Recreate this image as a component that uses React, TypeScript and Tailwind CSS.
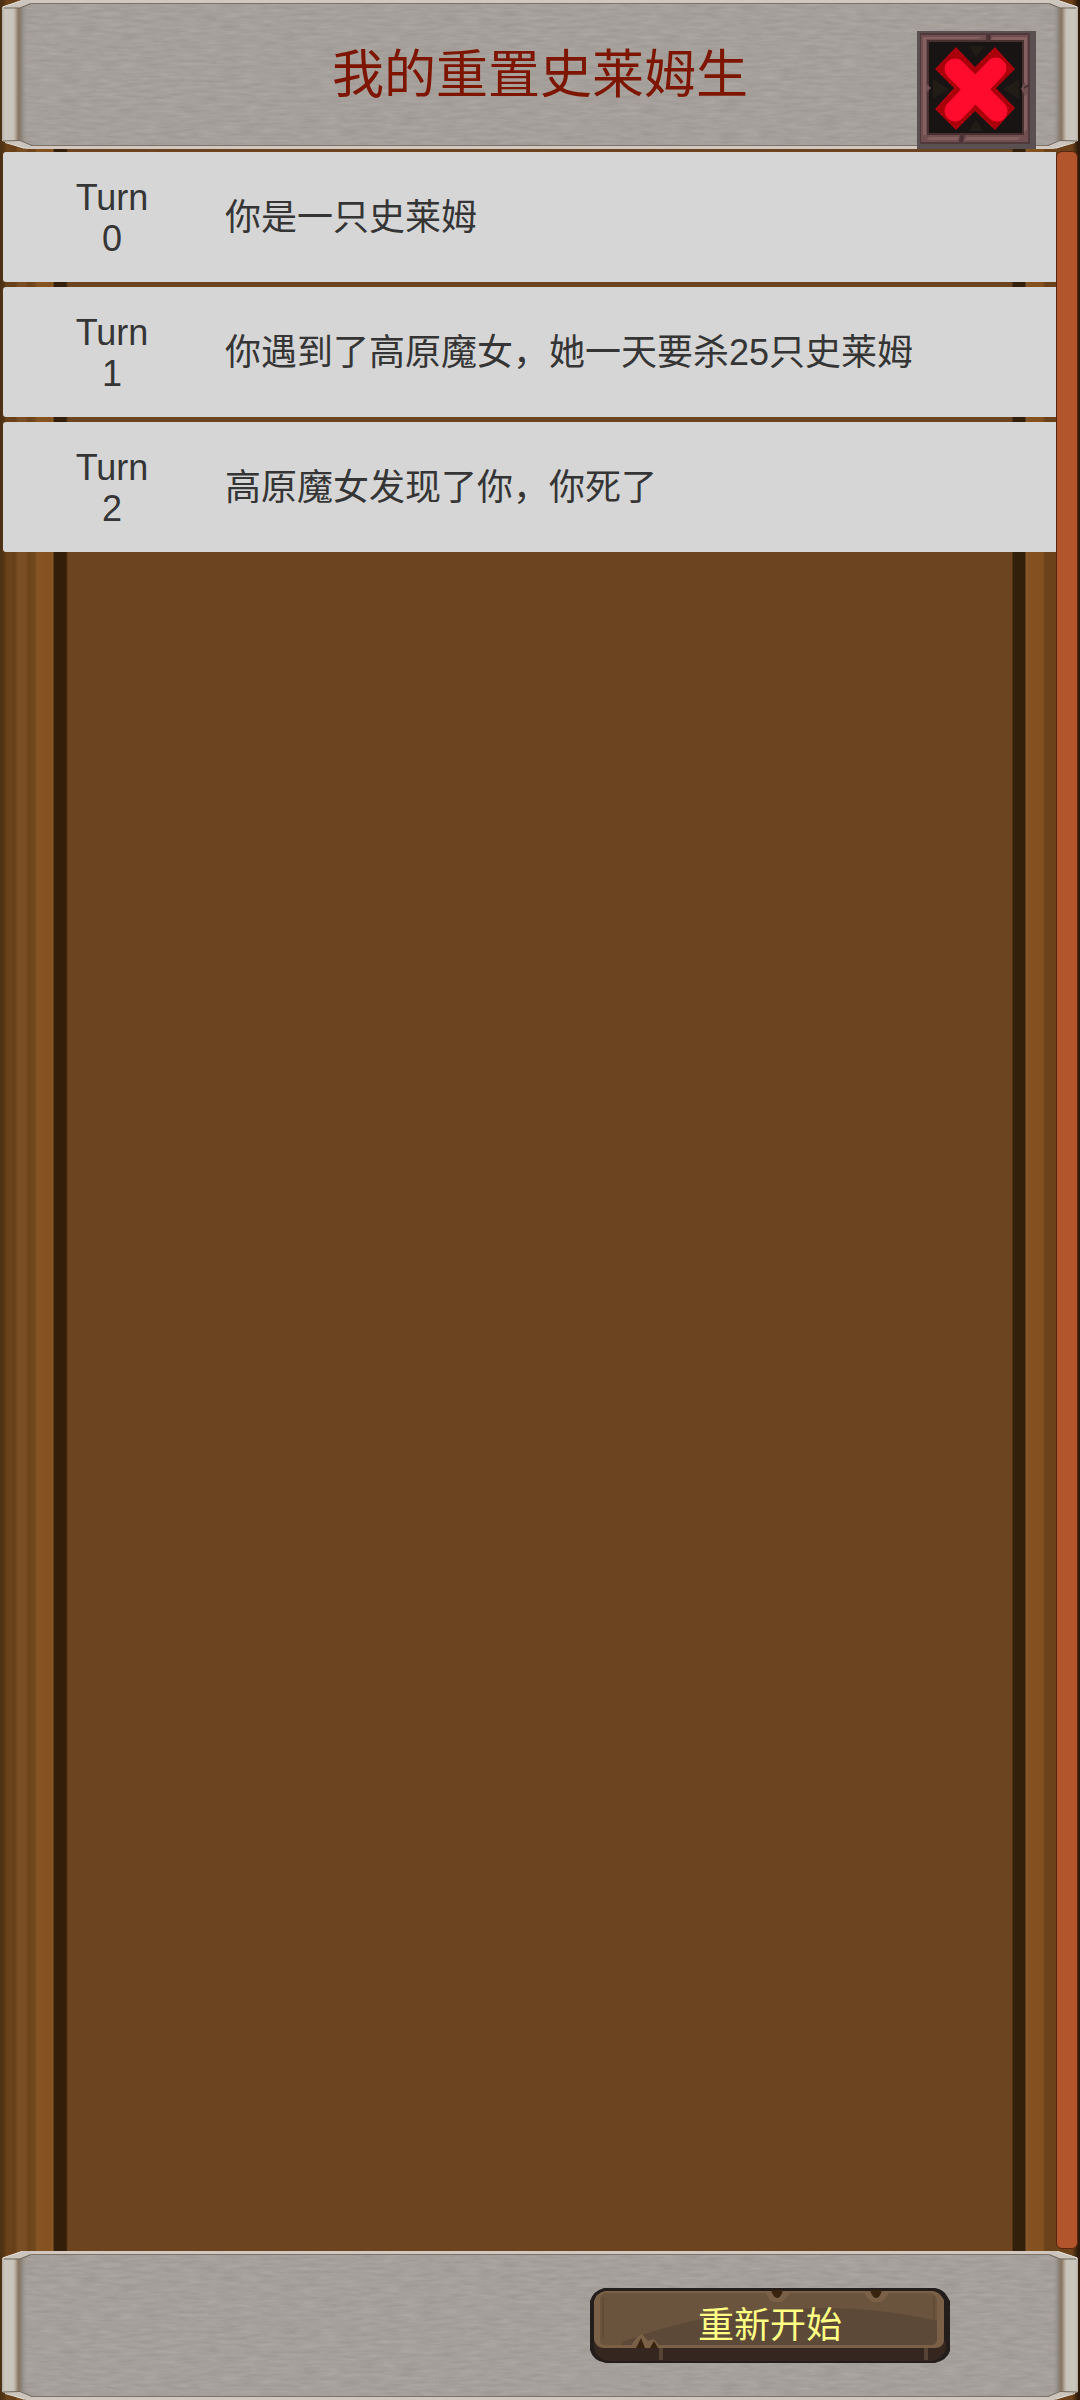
import type { ReactNode } from "react";

const turns = [
    { turn: 0, text: "你是一只史莱姆" },
    { turn: 1, text: "你遇到了高原魔女，她一天要杀25只史莱姆" },
    { turn: 2, text: "高原魔女发现了你，你死了" },
];

// Carved end piece of a stone bar, mirrored for the right side
function StoneEnd({ id, flip }: { id: string; flip?: boolean }) {
    return (
        <svg
            viewBox="0 0 34 149"
            className={flip ? "relative h-[149px] w-[34px] shrink-0 -scale-x-100" : "relative h-[149px] w-[34px] shrink-0"}
            aria-hidden="true"
        >
            <defs>
                <linearGradient id={id} x1="0" x2="1" y1="0" y2="0">
                    <stop offset="0" stopColor="#b5afa6" />
                    <stop offset="0.15" stopColor="#cbc7bf" />
                    <stop offset="0.6" stopColor="#c8c4bb" />
                    <stop offset="0.72" stopColor="#b3a797" />
                    <stop offset="0.86" stopColor="#887561" />
                    <stop offset="1" stopColor="#8d8074" />
                </linearGradient>
                <linearGradient id={id + "-in"} x1="0" x2="1" y1="0" y2="0">
                    <stop offset="0" stopColor="#7d7468" stopOpacity="0.7" />
                    <stop offset="1" stopColor="#a5a09b" stopOpacity="0" />
                </linearGradient>
            </defs>
            <path d="M21 4 H28 V145 H21 Z" fill={`url(#${id}-in)`} />
            <path d="M2 7 H21 V141 H2 Z" fill={`url(#${id})`} />
            <path d="M28 0 H34 V3 H31 Z" fill="#d3c8bf" />
            <path d="M31 3 H34 V4 H30 Z" fill="#7b736b" />
            <path d="M2 7 L22 0 H29 L32 3 L21 8 Z" fill="#cbc5bd" />
            <path d="M4 8 H20 L31 3.5" fill="none" stroke="#71685d" strokeWidth="1.2" />
            <path d="M3 6.8 L22 0.6" stroke="#e1ddd6" strokeWidth="1" />
            <path d="M24 149 H34 V146 H31 Z" fill="#d3c8bf" />
            <path d="M31 145 H34 V146 H30 Z" fill="#7b736b" />
            <path d="M2 141 L24 148.5 H28 L32 145.5 L21 140.5 Z" fill="#cbc5bd" />
            <path d="M3 141 L20 140.5 L32 145.5" fill="none" stroke="#71685d" strokeWidth="1" />
            <path d="M5 142.5 L24 148" stroke="#e1ddd6" strokeWidth="1" />
        </svg>
    );
}

function StoneBar({ id, children }: { id: string; children: ReactNode }) {
    return (
        <div className="relative flex h-[149px] shrink-0">
            <div className="absolute inset-x-5 top-[3px] bottom-[3px] bg-[#a5a09b]">
                <svg className="h-full w-full" aria-hidden="true">
                    <filter id={id + "-grain"} x="0" y="0" width="100%" height="100%" colorInterpolationFilters="sRGB">
                        <feTurbulence type="fractalNoise" baseFrequency="0.05 0.3" numOctaves="3" seed="4" />
                        <feColorMatrix values="0.26 0 0 0 0.52  0.26 0 0 0 0.5  0.26 0 0 0 0.475  0 0 0 0 1" />
                    </filter>
                    <rect width="100%" height="100%" filter={`url(#${id}-grain)`} opacity="0.32" />
                </svg>
            </div>
            <StoneEnd id={id} />
            <div className="relative min-w-0 flex-1 border-y-[3px] border-[#d3c8bf]">
                <div className="h-full border-y border-[#7b736b]">{children}</div>
            </div>
            <StoneEnd id={id + "-r"} flip />
        </div>
    );
}

function CloseIcon() {
    return (
        <svg viewBox="0 0 119 118" className="h-[118px] w-[119px]" aria-hidden="true">
            <rect width="119" height="118" fill="#5a4f51" />
            <rect x="3" y="2" width="110" height="111" fill="#51383b" />
            <rect x="4" y="4" width="107" height="107" fill="#704f51" />
            <path d="M6 6 H66 L60 8 H9 V104 H6 Z" fill="#865f60" />
            <path d="M76 6 H110 V54 L106 50 V9 H74 Z" fill="#865f60" />
            <path d="M106 66 L110 63 V98 L106 103 Z M12 106 H42 L40 109 H10 Z M50 106 H104 L100 109 H48 Z" fill="#865f60" />
            <rect x="10" y="9" width="97" height="95" fill="#47302f" />
            <rect x="12" y="11" width="93" height="91" fill="#181414" />
            <path d="M52 15 L59 26 L67 15 Z M52 100 L59 89 L66 100 Z M16 48 L32 58 L16 68 Z M102 48 L86 58 L102 68 Z" fill="#221c17" />
            <path d="M69 4 H74 L73 11 H69 Z M43 103 H48 L46 111 H42 Z" fill="#4c3234" />
            <path d="M10 53 L14 57 L10 61 Z M107 52 L104 58 L107 63 Z" fill="#704f51" />
            <path d="M107 57 L112 54" fill="none" stroke="#4c3234" strokeWidth="2" />
            <path
                d="M39 16 L58 36 L78 16 L98 38 L79 57 L98 77 L78 99 L58 80 L39 99 L18 78 L37 57 L18 38 Z"
                fill="#ab000c"
            />
            <path d="M38 38 L80 80 M79 37 L38 80" stroke="#ff0b2d" strokeWidth="21" strokeLinecap="round" />
        </svg>
    );
}

function PlankArt() {
    return (
        <svg viewBox="0 0 360 75" className="absolute inset-0 h-full w-full" aria-hidden="true">
            <path d="M14 0 H345 Q353 1 357 8 L360 13 V63 Q357 72 345 75 H16 Q3 73 0 62 V13 Q3 3 14 0 Z" fill="#231d1b" />
            <path d="M4 53 H356 V61 Q354 70 342 73 H17 Q6 70 4 60 Z" fill="#35271f" />
            <path d="M15 3 H343 Q350 4 354 12 V53 Q353 59 346 60 H13 Q6 59 4 52 V13 Q6 5 15 3 Z" fill="#7b6048" />
            <path d="M15 5 H340 Q346 6 347 11 V52 Q346 57 341 57 H14 Q10 57 10 51 V11 Q10 6 15 5 Z" fill="#6b543e" />
            <path d="M32 54 Q90 32 150 25 Q260 12 347 33 V52 Q346 57 341 57 H32 Z" fill="#5c4938" />
            <path d="M13 9 V51 M344 9 V51" stroke="#5f4936" strokeWidth="1.5" />
            <path d="M174 3 H201 Q196 13 190 14 H183 Q179 12 174 3 Z M273 3 H300 Q295 13 290 14 H283 Q278 12 273 3 Z" fill="#7b6048" />
            <path d="M181 2 H193 Q191 10 187 10 Q183 9 181 2 Z M280 2 H292 Q290 10 286 10 Q282 9 280 2 Z" fill="#38230f" />
            <path d="M40 59 L47 49 L52 46 L58 53 L64 51 L71 60 Z" fill="#7b6048" />
            <path d="M46 60 L51 50 L55 60 Z M60 60 L64 53 L68 60 Z" fill="#38230f" />
            <path d="M71 60 V72 M336 60 V72" stroke="#564335" strokeWidth="4" />
        </svg>
    );
}

function App() {
    return (
        <div className="flex min-h-screen flex-col bg-[#6c4420] bg-[linear-gradient(90deg,#4a3015_0px,#553614_4px,#6c421a_7px,#66401a_15px,#7b4d24_18px,#7b4d24_26px,#6b431a_28px,#74481d_35px,#855523_37px,#85501f_50px,#8a5a26_53px,#331f09_54px,#331f09_66px,#6c4420_68px,#6c4420_calc(100%-68px),#33200a_calc(100%-67px),#33200a_calc(100%-55px),#87592b_calc(100%-54px),#85511f_calc(100%-50px),#82501f_calc(100%-37px),#6b421a_calc(100%-35px),#6b421a_calc(100%-8px),#2e1a0a_calc(100%-2px),#2e1a0a_100%)] font-['Liberation_Sans','Noto_Sans_CJK_SC',sans-serif]">
            <header>
                <StoneBar id="top">
                    <div className="grid h-full grid-cols-[1fr_auto_1fr] items-center">
                        <h1 className="col-start-2 text-[52px] leading-[60px] text-[#7d1500]">我的重置史莱姆生</h1>
                        <button type="button" aria-label="关闭" className="-mb-1 mr-[10px] cursor-pointer self-end justify-self-end">
                            <CloseIcon />
                        </button>
                    </div>
                </StoneBar>
            </header>

            {/* Turn log */}
            <main className="flex flex-1 pt-[2px] pr-[2px] pb-[2px] pl-[3px]">
                <ol className="flex flex-1 flex-col gap-[5px] pt-px">
                    {turns.map(({ turn, text }) => (
                        <li
                            key={turn}
                            className="flex h-[130px] items-center rounded-l-[3px] bg-[#d6d6d6] text-[36px] leading-[41px] text-[#353535]"
                        >
                            <span className="flex w-[222px] shrink-0 flex-col items-center pt-[2px] pr-1">
                                <span>Turn</span>
                                <span>{turn}</span>
                            </span>
                            <p>{text}</p>
                        </li>
                    ))}
                </ol>
                <div className="w-[22px] shrink-0 rounded-[6px] border border-[#5a2410] bg-[#b2552d]" />
            </main>

            <footer>
                <StoneBar id="bottom">
                    <div className="flex h-full items-center justify-end">
                        <button type="button" className="relative mr-24 h-[75px] w-[360px] cursor-pointer text-[36px] text-[#ffff84]">
                            <PlankArt />
                            <span className="relative">重新开始</span>
                        </button>
                    </div>
                </StoneBar>
            </footer>
        </div>
    );
}

export default App;
